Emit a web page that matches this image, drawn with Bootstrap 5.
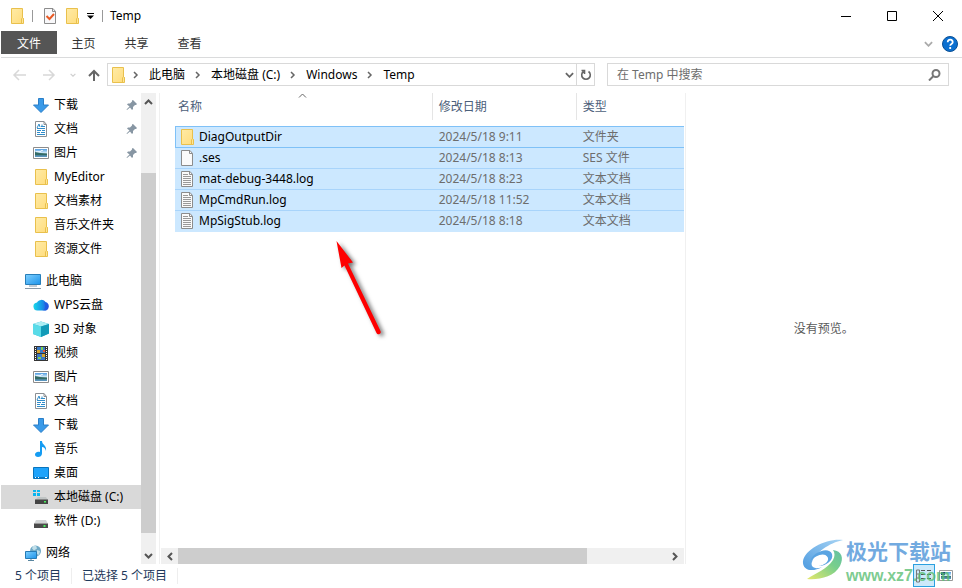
<!DOCTYPE html>
<html lang="zh-CN">
<head>
<meta charset="utf-8">
<meta name="viewport" content="width=device-width, initial-scale=1">
<title>Temp</title>
<link href="https://cdn.jsdelivr.net/npm/bootstrap@5.3.0/dist/css/bootstrap.min.css" rel="stylesheet">
<style>
  body { font: 12px/16px "Noto Sans", "Noto Sans CJK SC", sans-serif; color: #000; background: #fff; padding-left: 1px; overflow: hidden; }
  a { color: inherit; text-decoration: none; }
  button { border: 0; background: none; padding: 0; color: inherit; display: flex; align-items: center; justify-content: center; }
  svg { display: block; flex: none; }
  .titlebar { height: 31px; padding-left: 8px; gap: 7px; }
  .win-controls { margin-right: 1px; }
  .bar { width: 1px; height: 12px; background: #999; }
  .win-btn { width: 46px; height: 30px; }
  .ribbon { height: 27px; border-bottom: 1px solid #dadbdc; }
  .ribbon a { height: 23px; line-height: 25px; width: 53px; text-align: center; color: #333; }
  .ribbon a.file-tab { width: 56px; background: #555; color: #fff; }
  .ribbon-toggle { color: #aaa; margin-right: 9px; }
  .addr { height: 35px; padding: 5px 13px 7px 11px; }
  .nav-btns { gap: 14px; margin-right: 5px; }
  .nav-btns .recent { color: #d0d0d0; }
  .nav-btns .up { margin-left: -6px; }
  .addr-box { height: 23px; border: 1px solid #d9d9d9; min-width: 0; }
  .path-box { flex: 484 1 0; padding-left: 2px; }
  .crumbs { margin-left: 7px; }
  .crumbs a { margin: 0 10px 0 10px; }
  .history { color: #666; margin-right: 2px; }
  .search-box { flex: 324 1 0; margin-left: 12px; padding: 0 7px 0 9px; }
  .search-box input { border: 0; outline: 0; padding: 0; background: none; min-width: 0; color: #6d6d6d; }
  .search-box input::placeholder { color: #6d6d6d; opacity: 1; }
  .refresh { width: 18px; align-self: stretch; border-left: 1px solid #d9d9d9; }
  .panes { min-height: 0; }
  .side { width: 140px; overflow: hidden; }
  .side a { display: flex; align-items: center; height: 24px; padding-left: 32px; white-space: nowrap; }
  .side a.top-item { padding-left: 24px; margin-top: 8px; }
  .side a svg { margin-right: 5px; }
  .side a.active { background: #d9d9d9; }
  .side a .pin { margin: 0 3px 0 auto; }
  .vscroll { width: 15px; background: #f0f0f0; }
  .vscroll button { height: 17px; width: 15px; }
  .hscroll { height: 16px; background: #f0f0f0; margin: 0 1px; }
  .hscroll button { width: 17px; height: 16px; }
  .thumb { background: #cdcdcd; }
  .s14 { flex: 14 1 0; } .s63 { flex: 63 1 0; } .s361 { flex: 361 1 0; }
  .h409 { flex: 409 1 0; } .h80 { flex: 80 1 0; }
  .files { flex: 526 1 0; margin-left: 3px; border-left: 1px solid #f0f0f0; border-right: 1px solid #f0f0f0; min-width: 0; }
  .preview { flex: 277 1 0; color: #5a5a5a; }
  .file-table { border-collapse: separate; border-spacing: 0; table-layout: fixed; margin-left: 15px; width: calc(100% - 16px); white-space: nowrap; }
  .file-table th { font-weight: 400; color: #4c607a; height: 27px; padding: 0 6px; border-right: 1px solid #e5e5e5; }
  .file-table th:first-child { padding-left: 3px; position: relative; }
  .file-table th:last-child { border-right: 0; }
  .sort { position: absolute; left: 50%; top: 0; margin-left: -5px; }
  .col-date { width: 144px; } .col-type { width: 107px; }
  .file-table td { height: 21px; padding: 0 6px; background: #cce8ff; border-top: 1px solid #a8d4fb; color: #6d6d6d; }
  .file-table td:first-child { padding-left: 5px; color: #000; }
  .file-table tr.focused td { border-top-color: #7fc1f7; }
  .file-table tr.focused td:first-child { border-left: 1px solid #7fc1f7; padding-left: 4px; }
  .file-table tr.focused + tr td { border-top-color: #7fc1f7; }
  .file-table tbody tr:last-child td { border-bottom: 1px solid #cce8ff; height: 22px; }
  .file-name { gap: 5px; }
  .spacer-row th { height: 6px; padding: 0; border: 0; }
  .status { height: 24px; padding-left: 14px; color: #1e395b; }
  .status span { padding-right: 10px; margin-right: 10px; border-right: 1px solid #eee; }
  .view-btns { z-index: 2; right: 9px; bottom: 1px; gap: 4px; }
  .view-on { width: 22px; height: 23px; border: 1px solid #2ba0e0; background: #cce9fa; }
  .watermark { z-index: 3; right: 11px; bottom: 3px; gap: 2px; pointer-events: none; }
  .wm-name { font: 700 21px/30px "Noto Sans CJK SC", sans-serif; color: #72aae0; margin-bottom: 2px; }
  .wm-url { font: 700 16px/18px "Liberation Sans", sans-serif; color: rgba(90,190,115,.8); }
  .pointer { z-index: 4; left: 328px; top: 236px; filter: drop-shadow(3px 2px 2px rgba(0,0,0,.55)); }
</style>
<script src="https://cdn.jsdelivr.net/npm/bootstrap@5.3.0/dist/js/bootstrap.bundle.min.js"></script>
</head>
<body class="vh-100 d-flex flex-column position-relative">
<svg width="0" height="0" class="position-absolute" aria-hidden="true">
  <defs>
    <linearGradient id="gf" x2="1" y2="1"><stop stop-color="#ffeba6"/><stop offset="1" stop-color="#ffdc7c"/></linearGradient>
    <linearGradient id="gs" x2="1" y2="1"><stop stop-color="#7fd0ff"/><stop offset="1" stop-color="#1c93ea"/></linearGradient>
    <linearGradient id="gp" x2="0" y2="1"><stop stop-color="#4f9be0"/><stop offset=".5" stop-color="#d8eefa"/><stop offset=".6" stop-color="#3d6f6d"/><stop offset="1" stop-color="#5f9ccc"/></linearGradient>
    <linearGradient id="gw" x2="1"><stop stop-color="#19d7e8"/><stop offset=".5" stop-color="#159be8"/><stop offset="1" stop-color="#2452e0"/></linearGradient>
    <linearGradient id="gl1" x1="0" y1="1" x2="1" y2="0"><stop stop-color="#4d9be0"/><stop offset="1" stop-color="#a8d4f4"/></linearGradient>
    <linearGradient id="gl2" x1="0" y1="1" x2="1" y2="0"><stop stop-color="#e5e86c"/><stop offset=".6" stop-color="#79cf8b"/><stop offset="1" stop-color="#62c0a5"/></linearGradient>
    <symbol id="folder" viewBox="0 0 16 16"><path d="M2.500.5h11v10h1v5h-12z" fill="url(#gf)" stroke="#e9c04c"/><path d="M12.500 15v-4l1-1.500 1 1V15" fill="#ffe695" stroke="#e9c04c"/></symbol>
    <symbol id="down" viewBox="0 0 16 16"><path d="M5.500 1.500h5v6.500h5L8 15.500.5 8h5z" fill="#3a9ae8" stroke="#2a7fc8"/></symbol>
    <symbol id="doc" viewBox="0 0 16 16"><path d="M2.500.5h8.500l2.500 3v12h-11z" fill="#fff" stroke="#8a8f94"/><path d="M11 .5v3h2.500" fill="none" stroke="#8a8f94"/><path d="M4 7l2-4 1 3M9 3.500v2M8 5.500h4M4 7.500h8M4 9.500h4M9 9.500h3M4 11.500h3M8 11.500h4M4 13.500h8" stroke="#318dca" fill="none"/></symbol>
    <symbol id="pic" viewBox="0 0 16 16"><path d="M.5 2.500h15v11H.5z" fill="#fff" stroke="#8c8c8c"/><path d="M2 4h12v8H2z" fill="url(#gp)"/><path d="M2 7l5 1 7 1v1H2z" fill="#336b65"/><path d="M3 6.500h5V5.500h2" stroke="#fff" opacity=".7" fill="none"/></symbol>
    <symbol id="pc" viewBox="0 0 16 16"><path d="M.5 1.500h15v10H.5z" fill="url(#gs)" stroke="#287eb9"/><path d="M4 13h8M0 15.500h16" stroke="#8899a8"/></symbol>
    <symbol id="cloud" viewBox="0 0 16 16"><path d="M5 13.500a4 4 0 0 1-1-8 5 5 0 0 1 8.500-.5A4.500 4.500 0 0 1 13 13.500z" fill="url(#gw)"/><path d="M9 13.500c3 0 4-5 2-8 5 0 6 8 1 8z" fill="#2455df" opacity=".7"/></symbol>
    <symbol id="cube" viewBox="0 0 16 16"><path d="M0 3l8-2.500L16 3v9.500L8 16l-8-3z" fill="#32b7d0"/><path d="M0 3l8-2.500L16 3 8 5.500z" fill="#aceef4"/><path d="M8 5.500L16 3v9.500L8 16z" fill="#129bb8"/><path d="M0 3l8 2.500V16l-8-3z" fill="#59dbe8"/></symbol>
    <symbol id="film" viewBox="0 0 16 16"><path d="M1 1h14v15H1z" fill="#353535"/><path d="M2.500 2v13M13.500 2v13" stroke="#fff" stroke-dasharray="1 1"/><path d="M4 2h8v6H4zM4 9h8v6H4z" fill="#3b79c7"/><path d="M4 5h3v3H4zM9 9h3v3H9z" fill="#d5a530"/><path d="M8 2h2v3H8zM5 12h3v2H5z" fill="#7ed251"/><path d="M10 5h2v2h-2z" fill="#e55a35"/></symbol>
    <symbol id="note" viewBox="0 0 16 16"><path d="M7 0h2c0 4 5 4 4 10-1-3-2-4-4-4v6.500C9 15 7 16 5 16s-3-1-3-2.500C2 12 4 10 7 11z" fill="#159cf2"/></symbol>
    <symbol id="desk" viewBox="0 0 16 16"><path d="M.5 2.500h15v11H.5z" fill="#1ea3fb" stroke="#0874bd"/><path d="M1 12.500h14" stroke="#0b78c0"/><path d="M2 12.500h1M5 12.500h1M12 12.500h2" stroke="#fff"/></symbol>
    <symbol id="drive" viewBox="0 0 16 16"><path d="M3 7h10l2 4H1z" fill="#d2d5d6"/><path d="M1 10.500h14V15H1z" fill="#4b4b4b"/><path d="M1 10.500h14" stroke="#999"/><path d="M10.500 12h2v2h-2z" fill="#48f05c"/></symbol>
    <symbol id="cdrive" viewBox="0 0 16 16"><path d="M5 8h8l2 3H2z" fill="#c0c4c4"/><path d="M2 10.500h13V15H2z" fill="#444"/><path d="M11 12h2v1.500h-2z" fill="#48f05c"/><path d="M0 1h3v2H0zM4 1h3v2H4zM0 4h3v3H0zM4 4h3v3H4z" fill="#0ab5ef"/></symbol>
    <symbol id="net" viewBox="0 0 16 16"><circle cx="10.500" cy="6" r="5.500" fill="#6fa9c6"/><path d="M8 1l3-.5 1 3-3 2-2-2zM12 5l3 1-1 4-2-1z" fill="#c1dfe9"/><path d="M.5 6.500h11v7H.5z" fill="url(#gs)" stroke="#267bb5"/><path d="M3 15.500h6M6 14v1" stroke="#58859f"/></symbol>
    <symbol id="page" viewBox="0 0 16 16"><path d="M2.500.5H11l2.500 3v12h-11z" fill="#fafafa" stroke="#8c8c8c"/><path d="M10.500.5v3h3" fill="none" stroke="#8c8c8c"/></symbol>
    <symbol id="log" viewBox="0 0 16 16"><path d="M2.500.5H11l2.500 3v12h-11z" fill="#fafafa" stroke="#8c8c8c"/><path d="M10.500.5v3h3" fill="none" stroke="#8c8c8c"/><path d="M4 3.500h5M4 5.500h8M4 7.500h8M4 9.500h8M4 11.500h8M4 13.500h8" stroke="#999"/></symbol>
    <symbol id="pin" viewBox="0 0 12 12"><path d="M7 1l4 4-1 1H9L7 8v2L6 11 4 8.500 1 11 .5 10.500 3.500 7.500 1 5.500l1-1h2l2-2V1.500z" fill="#8796a3"/></symbol>
    <symbol id="chev" viewBox="0 0 6 8"><path d="M1 1l3 3-3 3" fill="none" stroke="#666" stroke-width="1.500"/></symbol>
    <symbol id="angle" viewBox="0 0 10 6"><path d="M1 1l4 4 4-4" fill="none" stroke="currentColor" stroke-width="2"/></symbol>
  </defs>
</svg>

<header>
  <div class="titlebar d-flex align-items-center">
    <svg width="16" height="16"><use href="#folder"/></svg>
    <div class="bar"></div>
    <button type="button" aria-label="属性"><svg width="18" height="16" viewBox="-2 0 18 16"><path d="M2.500.5H11l2.500 3v12h-11z" fill="#f8f8fa" stroke="#8c8c8c"/><path d="M10.500.5v3h3" fill="none" stroke="#8c8c8c"/><path d="M4.500 8l3 3L12 6" fill="none" stroke="#e85a25" stroke-width="2"/></svg></button>
    <button type="button" aria-label="新建文件夹"><svg width="14" height="16" viewBox="1 0 14 16"><use href="#folder" width="16" height="16"/></svg></button>
    <button type="button" aria-label="自定义快速访问工具栏"><svg width="9" height="6" viewBox="0 0 9 6"><path d="M1 .5h7" stroke="#000"/><path d="M1 2.500h7L4.500 6z"/></svg></button>
    <div class="bar"></div>
    <span>Temp</span>
    <div class="win-controls d-flex ms-auto">
      <button class="win-btn" type="button" aria-label="最小化"><svg width="10" height="10" viewBox="0 0 10 10"><path d="M0 5.500h10" stroke="#000"/></svg></button>
      <button class="win-btn" type="button" aria-label="最大化"><svg width="10" height="10" viewBox="0 0 10 10"><path d="M.5.5h9v9h-9z" fill="none" stroke="#000"/></svg></button>
      <button class="win-btn" type="button" aria-label="关闭"><svg width="10" height="10" viewBox="0 0 10 10"><path d="M0 0l10 10M10 0L0 10" stroke="#000"/></svg></button>
    </div>
  </div>
  <nav class="ribbon d-flex" aria-label="功能区">
    <a class="file-tab" href="#">文件</a><a href="#">主页</a><a href="#">共享</a><a href="#">查看</a>
    <button class="ribbon-toggle ms-auto" type="button" aria-label="展开功能区"><svg width="9" height="6"><use href="#angle"/></svg></button>
    <button class="me-1" type="button" aria-label="帮助"><svg width="16" height="16" viewBox="0 0 16 16"><circle cx="8" cy="8" r="7.500" fill="#0a6fd0" stroke="#0a4f94"/><path d="M5.700 6.200c0-3.500 5-3.200 5 0C10.700 8 8.200 8 8.200 9.800M8.200 11v2" fill="none" stroke="#fff" stroke-width="1.800"/></svg></button>
  </nav>
  <div class="addr d-flex align-items-center">
    <div class="nav-btns d-flex align-items-center">
      <button type="button" aria-label="后退"><svg width="16" height="12" viewBox="0 0 16 12"><path d="M14 6H3M7 1L2 6l5 5" fill="none" stroke="#d8d8d8" stroke-width="1.500"/></svg></button>
      <button type="button" aria-label="前进"><svg width="14" height="12" viewBox="0 0 14 12"><path d="M1 6h11M7 1l5 5-5 5" fill="none" stroke="#d8d8d8" stroke-width="1.500"/></svg></button>
      <button type="button" class="recent" aria-label="最近位置"><svg width="6" height="4"><use href="#angle"/></svg></button>
      <button type="button" class="up" aria-label="上移"><svg width="18" height="12" viewBox="0 0 18 12"><path d="M10 12V2M5 7l5-5 5 5" fill="none" stroke="#666" stroke-width="2"/></svg></button>
    </div>
    <div class="addr-box path-box d-flex align-items-center">
      <svg width="16" height="16"><use href="#folder"/></svg>
      <nav class="crumbs d-flex align-items-center flex-grow-1 text-nowrap" aria-label="路径">
        <svg width="6" height="8"><use href="#chev"/></svg><a href="#">此电脑</a>
        <svg width="6" height="8"><use href="#chev"/></svg><a href="#">本地磁盘 (C:)</a>
        <svg width="6" height="8"><use href="#chev"/></svg><a href="#">Windows</a>
        <svg width="6" height="8"><use href="#chev"/></svg><a href="#">Temp</a>
      </nav>
      <button type="button" class="history" aria-label="历史记录"><svg width="9" height="6"><use href="#angle"/></svg></button>
      <button type="button" class="refresh" aria-label="刷新"><svg width="12" height="12" viewBox="0 0 12 12"><path d="M8.500 2.500a4.300 4.300 0 1 1-5 0M1.500 1.500h3v3.500" fill="none" stroke="#666" stroke-width="1.600"/></svg></button>
    </div>
    <form class="addr-box search-box d-flex align-items-center">
      <input class="flex-grow-1" type="text" placeholder="在 Temp 中搜索" aria-label="在 Temp 中搜索">
      <button type="button" aria-label="搜索"><svg width="13" height="12" viewBox="0 0 13 12"><circle cx="8" cy="4.500" r="3.500" fill="none" stroke="#777" stroke-width="2"/><path d="M5.500 7L1 11.500" stroke="#777" stroke-width="2"/></svg></button>
    </form>
  </div>
</header>

<main class="panes d-flex flex-grow-1">
  <nav class="side" aria-label="导航窗格">
    <a href="#"><svg width="16" height="16"><use href="#down"/></svg>下载<svg class="pin" width="12" height="12"><use href="#pin"/></svg></a>
    <a href="#"><svg width="16" height="16"><use href="#doc"/></svg>文档<svg class="pin" width="12" height="12"><use href="#pin"/></svg></a>
    <a href="#"><svg width="16" height="16"><use href="#pic"/></svg>图片<svg class="pin" width="12" height="12"><use href="#pin"/></svg></a>
    <a href="#"><svg width="16" height="16"><use href="#folder"/></svg>MyEditor</a>
    <a href="#"><svg width="16" height="16"><use href="#folder"/></svg>文档素材</a>
    <a href="#"><svg width="16" height="16"><use href="#folder"/></svg>音乐文件夹</a>
    <a href="#"><svg width="16" height="16"><use href="#folder"/></svg>资源文件</a>
    <a class="top-item" href="#"><svg width="16" height="16"><use href="#pc"/></svg>此电脑</a>
    <a href="#"><svg width="16" height="16"><use href="#cloud"/></svg>WPS云盘</a>
    <a href="#"><svg width="16" height="16"><use href="#cube"/></svg>3D 对象</a>
    <a href="#"><svg width="16" height="16"><use href="#film"/></svg>视频</a>
    <a href="#"><svg width="16" height="16"><use href="#pic"/></svg>图片</a>
    <a href="#"><svg width="16" height="16"><use href="#doc"/></svg>文档</a>
    <a href="#"><svg width="16" height="16"><use href="#down"/></svg>下载</a>
    <a href="#"><svg width="16" height="16"><use href="#note"/></svg>音乐</a>
    <a href="#"><svg width="16" height="16"><use href="#desk"/></svg>桌面</a>
    <a class="active" href="#"><svg width="16" height="16"><use href="#cdrive"/></svg>本地磁盘 (C:)</a>
    <a href="#"><svg width="16" height="16"><use href="#drive"/></svg>软件 (D:)</a>
    <a class="top-item" href="#"><svg width="16" height="16"><use href="#net"/></svg>网络</a>
  </nav>
  <div class="vscroll d-flex flex-column">
    <button type="button" aria-label="向上滚动"><svg width="9" height="6" viewBox="0 0 9 6"><path d="M1 5l3.500-3.500L8 5" fill="none" stroke="#555" stroke-width="2"/></svg></button>
    <div class="s63"></div><div class="s361 thumb"></div><div class="s14"></div>
    <button type="button" aria-label="向下滚动"><svg width="9" height="6" viewBox="0 0 9 6"><path d="M1 1l3.500 3.500L8 1" fill="none" stroke="#555" stroke-width="2"/></svg></button>
  </div>
  <section class="files d-flex flex-column">
    <table class="file-table">
      <colgroup><col><col class="col-date"><col class="col-type"></colgroup>
      <thead>
        <tr><th scope="col">名称<svg class="sort" width="9" height="5" viewBox="0 0 9 5"><path d="M1 4.500L4.500 1 8 4.500" fill="none" stroke="#666"/></svg></th><th scope="col">修改日期</th><th scope="col">类型</th></tr>
        <tr class="spacer-row"><th colspan="3"></th></tr>
      </thead>
      <tbody>
        <tr class="focused"><td><div class="file-name d-flex align-items-center"><svg width="14" height="16" viewBox="1 0 14 16"><use href="#folder" width="16" height="16"/></svg>DiagOutputDir</div></td><td>2024/5/18 9:11</td><td>文件夹</td></tr>
        <tr><td><div class="file-name d-flex align-items-center"><svg width="14" height="16" viewBox="1 0 14 16"><use href="#page" width="16" height="16"/></svg>.ses</div></td><td>2024/5/18 8:13</td><td>SES 文件</td></tr>
        <tr><td><div class="file-name d-flex align-items-center"><svg width="14" height="16" viewBox="1 0 14 16"><use href="#log" width="16" height="16"/></svg>mat-debug-3448.log</div></td><td>2024/5/18 8:23</td><td>文本文档</td></tr>
        <tr><td><div class="file-name d-flex align-items-center"><svg width="14" height="16" viewBox="1 0 14 16"><use href="#log" width="16" height="16"/></svg>MpCmdRun.log</div></td><td>2024/5/18 11:52</td><td>文本文档</td></tr>
        <tr><td><div class="file-name d-flex align-items-center"><svg width="14" height="16" viewBox="1 0 14 16"><use href="#log" width="16" height="16"/></svg>MpSigStub.log</div></td><td>2024/5/18 8:18</td><td>文本文档</td></tr>
      </tbody>
    </table>
    <div class="hscroll d-flex mt-auto">
      <button type="button" aria-label="向左滚动"><svg width="6" height="9" viewBox="0 0 6 9"><path d="M5 1L1.500 4.500 5 8" fill="none" stroke="#555" stroke-width="2"/></svg></button>
      <div class="h409 thumb"></div><div class="h80"></div>
      <button type="button" aria-label="向右滚动"><svg width="6" height="9" viewBox="0 0 6 9"><path d="M1 1l3.500 3.500L1 8" fill="none" stroke="#555" stroke-width="2"/></svg></button>
    </div>
  </section>
  <aside class="preview d-flex align-items-center justify-content-center">没有预览。</aside>
</main>

<footer class="status d-flex align-items-center">
  <span>5 个项目</span><span>已选择 5 个项目</span>
</footer>

<div class="watermark position-absolute d-flex align-items-center" aria-hidden="true">
  <svg width="42" height="42" viewBox="0 0 42 42"><path d="M41 1C25-1 3 10 1 22c-1 9 9 12 19 6-7 3-12 0-10-5C13 14 27 4 41 1z" fill="url(#gl1)"/><path d="M8 23c2-10 19-16 22-8 2 6-6 12-13 12 5-2 9-5 8-9-2-5-12-2-17 5z" fill="#5aa4e2"/><path d="M14 22c2-5 11-7 12-3 1 4-4 7-9 8 3-2 5-4 4-6-1-2-4-1-7 1z" fill="#fff"/><path d="M5 40C14 34 25 30 31 21c2-4 2-7 0-10 9 1 11 8 7 16-6 11-21 14-33 13z" fill="url(#gl2)"/></svg>
  <div><div class="wm-name">极光下载站</div><div class="wm-url">www.xz7.com</div></div>
</div>
<div class="view-btns position-absolute d-flex align-items-center">
  <button class="view-on" type="button" aria-label="详细信息"><svg width="16" height="14" viewBox="0 0 16 14"><path d="M.5 1h3v12h-3zM1 5h2M1 9h2" fill="none" stroke="#777"/><path d="M5 1.500h4M11 1.500h4M5 5.500h4M11 5.500h4M5 9.500h4M11 9.500h4" stroke="#555"/></svg></button>
  <button type="button" aria-label="大图标"><svg width="14" height="11" viewBox="0 0 14 11"><path d="M.5.5h13v10H.5z" fill="#fff" stroke="#999"/><path d="M2 2h10v7H2z" fill="url(#gp)"/><path d="M2 2h4v3H2z" fill="#1c3b76"/></svg></button>
</div>
<svg class="pointer position-absolute" width="64" height="108" viewBox="0 0 64 108" aria-hidden="true"><path d="M8.500 5L25 26.500l-5 1L52.500 95a2 2 0 0 1-4 2L16.500 29.500 13.500 32z" fill="#fe0000"/></svg>
</body>
</html>
